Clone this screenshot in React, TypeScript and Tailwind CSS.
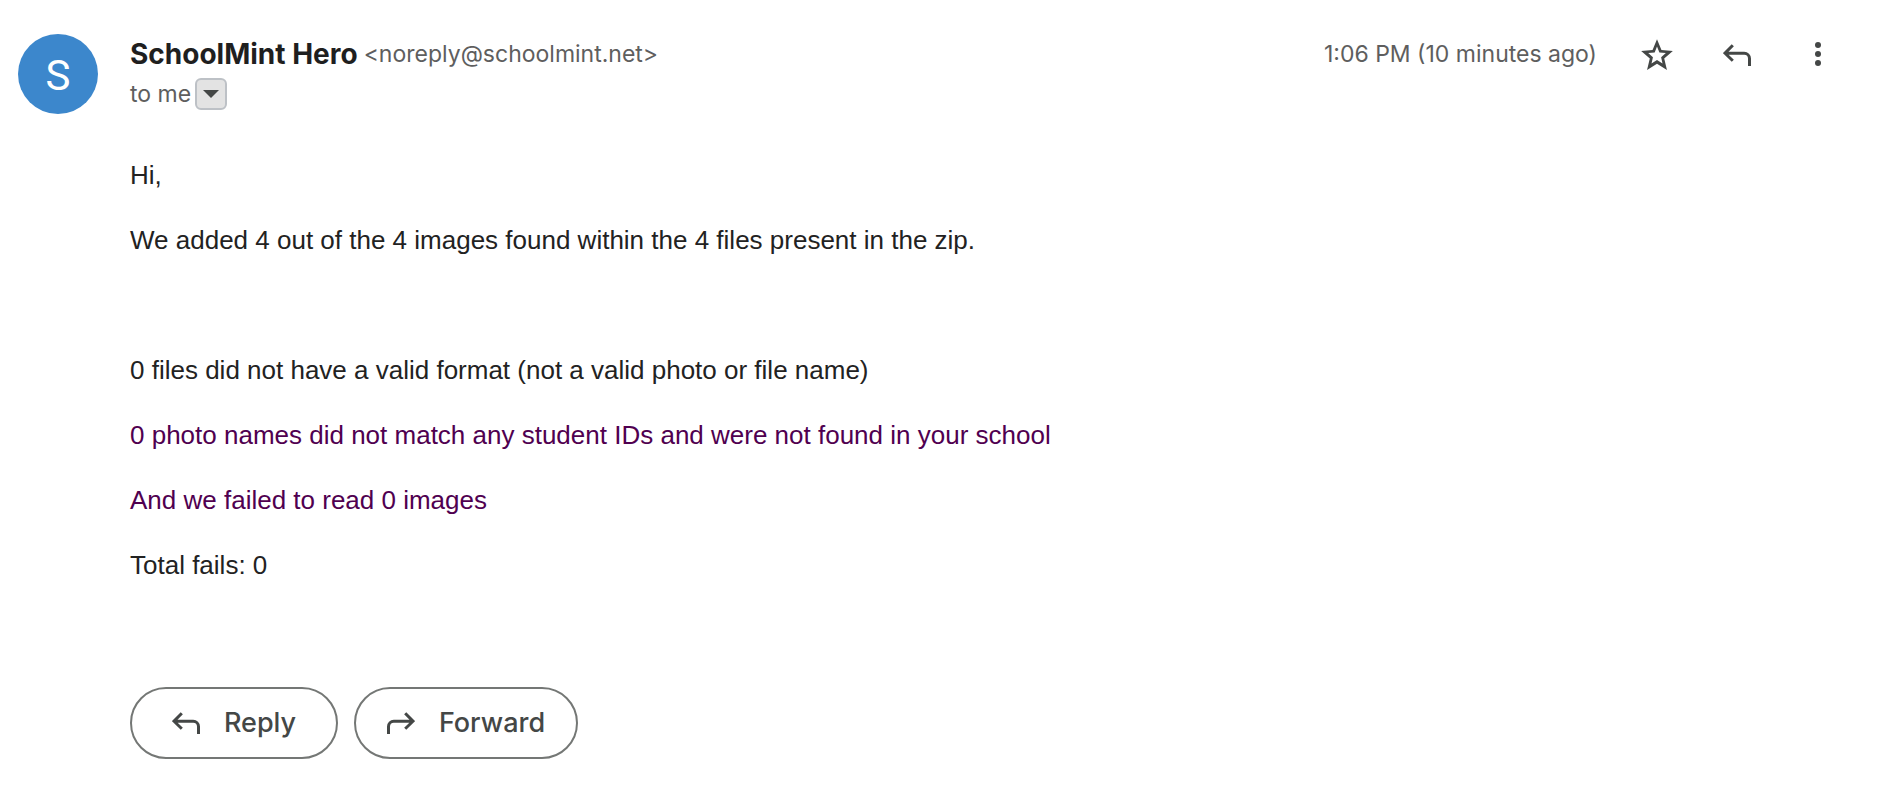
interface MessageLine {
    text: string
    quoted?: boolean
}

const lines: MessageLine[] = [
    { text: 'Hi,' },
    { text: 'We added 4 out of the 4 images found within the 4 files present in the zip.' },
    { text: '' },
    { text: '0 files did not have a valid format (not a valid photo or file name)' },
    { text: '0 photo names did not match any student IDs and were not found in your school', quoted: true },
    { text: 'And we failed to read 0 images', quoted: true },
    { text: 'Total fails: 0' },
]

function ReplyIcon({ className = '' }: { className?: string }) {
    return (
        <svg viewBox="0 0 28 22" fill="none" stroke="currentColor" strokeWidth="3" aria-hidden="true" className={`h-[22px] w-7 shrink-0 ${className}`}>
            <path d="M9.8 1.2 2 9.2l7.8 7.6M2 9.2h19.2a5.3 5.3 0 0 1 5.3 5.3V22" />
        </svg>
    )
}

function StarIcon() {
    return (
        <svg viewBox="0 0 24 24" fill="currentColor" aria-hidden="true" className="size-[38px]">
            <path d="M22 9.44l-7.19-.62L12 2 9.19 8.83 2 9.44l5.46 4.73L5.72 21.4 12 17.57l6.28 3.83-1.73-7.23L22 9.44zM12 15.2l-3.46 2.1.9-3.88-3-2.68 4.08-.38L12 6.7l1.51 3.66 4.08.38-3 2.68.9 3.88L12 15.2z" />
        </svg>
    )
}

function MoreIcon() {
    return (
        <svg viewBox="0 0 6 24" fill="currentColor" aria-hidden="true" className="h-6 w-1.5">
            <circle cx="3" cy="3" r="3" />
            <circle cx="3" cy="12" r="3" />
            <circle cx="3" cy="21" r="3" />
        </svg>
    )
}

export default function App() {
    return (
        <article className="flex min-h-screen gap-8 bg-white pl-[18px] pr-[67px] pt-[34px] font-['Inter','Liberation_Sans',sans-serif] text-[#5e5e5e]">
            <div className="flex size-20 shrink-0 items-center justify-center rounded-full bg-[#3c87cc] pt-0.5 font-['Roboto',sans-serif] text-[42px] text-white">
                S
            </div>

            <div className="min-w-0 flex-1">
                <header className="flex items-start justify-between">
                    <div>
                        <div className="flex h-10 items-center gap-1.5 whitespace-nowrap">
                            <h1 className="text-[28px] font-bold text-[#1f1f1f]">SchoolMint Hero</h1>
                            <span className="text-[23px]">&lt;noreply@schoolmint.net&gt;</span>
                        </div>
                        <div className="flex h-10 items-center gap-1 text-[23px]">
                            <span>to me</span>
                            <button type="button" aria-label="Show details"
                                className="flex size-8 items-center justify-center rounded-md border-2 border-[#bdc1c6] bg-[#e3e3e3] text-[#444746]">
                                <svg viewBox="0 0 16 8" fill="currentColor" aria-hidden="true" className="h-2 w-4">
                                    <path d="M0 0h16L8 8z" />
                                </svg>
                            </button>
                        </div>
                    </div>

                    <div className="flex h-10 items-center text-[#444746]">
                        <time className="mr-5 whitespace-nowrap text-[23px] text-[#5e5e5e]">1:06 PM (10 minutes ago)</time>
                        <button type="button" aria-label="Star" className="flex h-10 w-20 items-center justify-center pt-0.5"><StarIcon /></button>
                        <button type="button" aria-label="Reply" className="flex h-10 w-20 items-center justify-center pt-0.5"><ReplyIcon /></button>
                        <button type="button" aria-label="More" className="flex h-10 w-11 items-center justify-end"><MoreIcon /></button>
                    </div>
                </header>

                <div className="flex flex-col gap-[26px] pt-[42px] font-['Liberation_Sans',sans-serif] text-[26px] leading-[39px] text-[#222222]">
                    {lines.map((line, i) => (
                        <p key={i} className={line.quoted ? 'min-h-[39px] text-[#500050]' : 'min-h-[39px]'}>{line.text}</p>
                    ))}
                </div>

                <div className="flex gap-4 pt-[102px] text-[27px] font-medium text-[#444746]">
                    <button type="button" className="flex h-[72px] w-52 items-center justify-center gap-6 rounded-full border-2 border-[#747775]">
                        <ReplyIcon />
                        Reply
                    </button>
                    <button type="button" className="flex h-[72px] w-56 items-center justify-center gap-6 rounded-full border-2 border-[#747775]">
                        <ReplyIcon className="-scale-x-100" />
                        Forward
                    </button>
                </div>
            </div>
        </article>
    )
}
